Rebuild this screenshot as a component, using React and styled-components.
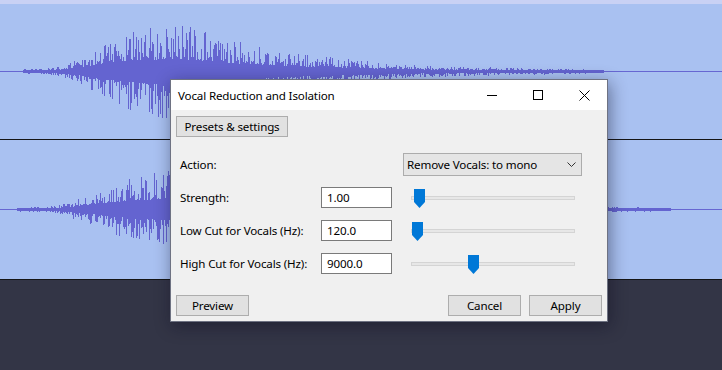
import React, { useMemo } from 'react'
import styled, { createGlobalStyle } from 'styled-components'

const GlobalStyle = createGlobalStyle`
  html, body {
    margin: 0;
    padding: 0;
  }
  body {
    width: 722px;
    height: 370px;
    overflow: hidden;
    background: #333546;
    font-family: "Noto Sans", "Liberation Sans", sans-serif;
  }
`

const Screen = styled.div`
  position: relative;
  width: 722px;
  height: 370px;
  display: flex;
  flex-direction: column;
  background: #333546;
`

const TopStrip = styled.div`
  height: 4px;
  background: #c9d1f4;
`

const Track = styled.div`
  height: ${p => p.$h}px;
  background: #a9c1f1;
  svg {
    display: block;
  }
`

const Divider = styled.div`
  height: 1px;
  background: #151515;
`

const Dialog = styled.div`
  position: absolute;
  left: 170px;
  top: 79px;
  width: 436px;
  border: 1px solid #6e7282;
  background: #f0f0f0;
  box-shadow: 2px 4px 16px rgba(10, 12, 30, 0.45);
  display: flex;
  flex-direction: column;
  font-size: 11.6px;
  letter-spacing: -0.15px;
  color: #000;
`

const TitleBar = styled.div`
  height: 30px;
  background: #fff;
  display: flex;
  align-items: center;
  padding-left: 7px;
`

const Title = styled.div`
  flex: 1;
`

const CaptionButton = styled.div`
  width: 46px;
  height: 30px;
  display: flex;
  align-items: center;
  justify-content: center;
`

const Body = styled.div`
  padding: 6px 5px 5px 5px;
  display: flex;
  flex-direction: column;
`

const PushButton = styled.button`
  box-sizing: border-box;
  width: ${p => p.$w}px;
  height: 21px;
  margin-left: ${p => p.$ml || '0'};
  padding: 0;
  background: #e1e1e1;
  border: 1px solid #adadad;
  font-family: inherit;
  font-size: inherit;
  letter-spacing: inherit;
  color: #000;
`

const Form = styled.div`
  margin-top: 16px;
  padding-left: 4px;
  display: flex;
  flex-direction: column;
`

const Row = styled.div`
  display: flex;
  align-items: center;
  height: ${p => p.$h}px;
  margin-top: ${p => p.$mt}px;
`

const Label = styled.div`
  width: ${p => p.$w}px;
  flex-shrink: 0;
`

const Dropdown = styled.div`
  box-sizing: border-box;
  width: 179px;
  height: 23px;
  display: flex;
  align-items: center;
  justify-content: space-between;
  padding: 0 5px 0 3px;
  background: #e5e5e5;
  border: 1px solid #acacac;
`

const TextBox = styled.input`
  box-sizing: border-box;
  width: 71px;
  height: 21px;
  padding: 0 5px;
  margin: 0;
  border: 1px solid #7a7a7a;
  background: #fff;
  font-family: inherit;
  font-size: inherit;
  letter-spacing: inherit;
  color: #000;
  outline: none;
`

const Slider = styled.div`
  position: relative;
  width: 164px;
  height: 21px;
  margin-left: 19px;
  display: flex;
  align-items: center;
`

const Rail = styled.div`
  box-sizing: border-box;
  width: 100%;
  height: 4px;
  margin-top: 1px;
  background: #e7e7e7;
  border: 1px solid #d4d4d4;
`

const Thumb = styled.div`
  position: absolute;
  top: 2px;
  width: 11px;
  height: 19px;
  background: #0078d7;
  clip-path: polygon(0 0, 100% 0, 100% 68%, 50% 100%, 0 68%);
`

const Footer = styled.div`
  margin-top: 21px;
  display: flex;
`

function makeRand(seed) {
  let s = seed >>> 0
  return () => {
    s = (s * 1664525 + 1013904223) >>> 0
    return s / 4294967296
  }
}

function envAt(points, x) {
  if (x < points[0][0] || x > points[points.length - 1][0]) return 0
  for (let i = 1; i < points.length; i++) {
    const [x0, a0] = points[i - 1]
    const [x1, a1] = points[i]
    if (x <= x1) return a0 + ((a1 - a0) * (x - x0)) / (x1 - x0)
  }
  return 0
}

function Waveform({ height, center, points, seed }) {
  const d = useMemo(() => {
    const rand = makeRand(seed)
    let out = ''
    for (let x = 0; x < 722; x++) {
      const e = envAt(points, x)
      if (e <= 0) continue
      const f1 = rand() < 0.12 ? 0.8 + rand() * 0.2 : 0.25 + 0.6 * Math.pow(rand(), 1.8)
      const f2 = rand() < 0.12 ? 0.8 + rand() * 0.2 : 0.25 + 0.6 * Math.pow(rand(), 1.8)
      const top = Math.max(1, Math.round(e * f1))
      const bot = Math.max(1, Math.round(e * f2))
      out += `M${x + 0.5} ${center - top}V${center + bot + 1}`
    }
    return out
  }, [points, seed, center])
  return (
    <svg width="722" height={height} shapeRendering="crispEdges">
      <rect x="0" y={center} width="722" height="1" fill="#6767d2" />
      <path d={d} stroke="#6464d0" strokeWidth="1" fill="none" />
    </svg>
  )
}

const wave1 = [
  [23, 1.5], [50, 3], [70, 8], [90, 18], [105, 30], [125, 38], [150, 44],
  [165, 48], [190, 44], [215, 38], [235, 30], [260, 24], [300, 18], [330, 14],
  [370, 10], [410, 6], [500, 3.5], [603, 1.5],
]

const wave2 = [
  [17, 1.5], [50, 2.5], [70, 8], [100, 20], [130, 32], [160, 40], [200, 42],
  [300, 30], [400, 12], [500, 5], [600, 2.5], [670, 1.5],
]

function TitleIcon({ kind }) {
  if (kind === 'min') {
    return (
      <svg width="10" height="10" shapeRendering="crispEdges">
        <rect x="0" y="5" width="10" height="1" fill="#000" />
      </svg>
    )
  }
  if (kind === 'max') {
    return (
      <svg width="10" height="10" shapeRendering="crispEdges">
        <rect x="0.5" y="0.5" width="9" height="9" fill="none" stroke="#000" strokeWidth="1" />
      </svg>
    )
  }
  return (
    <svg width="11" height="11">
      <path d="M0.5 0.5L10.5 10.5M10.5 0.5L0.5 10.5" stroke="#000" strokeWidth="1" />
    </svg>
  )
}

function SliderField({ label, value, pos, first }) {
  return (
    <Row $h={21} $mt={first ? 11 : 12}>
      <Label $w={141}>{label}</Label>
      <TextBox readOnly value={value} />
      <Slider>
        <Rail />
        <Thumb style={{ left: pos }} />
      </Slider>
    </Row>
  )
}

export default function App() {
  return (
    <Screen>
      <GlobalStyle />
      <TopStrip />
      <Track $h={135}>
        <Waveform height={135} center={67} points={wave1} seed={7} />
      </Track>
      <Divider />
      <Track $h={139}>
        <Waveform height={139} center={69} points={wave2} seed={31} />
      </Track>
      <Divider />

      <Dialog>
        <TitleBar>
          <Title>Vocal Reduction and Isolation</Title>
          <CaptionButton><TitleIcon kind="min" /></CaptionButton>
          <CaptionButton><TitleIcon kind="max" /></CaptionButton>
          <CaptionButton><TitleIcon kind="close" /></CaptionButton>
        </TitleBar>
        <Body>
          <PushButton $w={112}>Presets &amp; settings</PushButton>
          <Form>
            <Row $h={23} $mt={0}>
              <Label $w={223}>Action:</Label>
              <Dropdown>
                <span>Remove Vocals: to mono</span>
                <svg width="9" height="5">
                  <polyline points="0.5,0.5 4.5,4.5 8.5,0.5" fill="none" stroke="#333" strokeWidth="1" />
                </svg>
              </Dropdown>
            </Row>
            <SliderField label="Strength:" value="1.00" pos={3} first />
            <SliderField label="Low Cut for Vocals (Hz):" value="120.0" pos={1} />
            <SliderField label="High Cut for Vocals (Hz):" value="9000.0" pos={57} />
          </Form>
          <Footer>
            <PushButton $w={73}>Preview</PushButton>
            <PushButton $w={73} $ml="auto">Cancel</PushButton>
            <PushButton $w={73} $ml="8px">Apply</PushButton>
          </Footer>
        </Body>
      </Dialog>
    </Screen>
  )
}
